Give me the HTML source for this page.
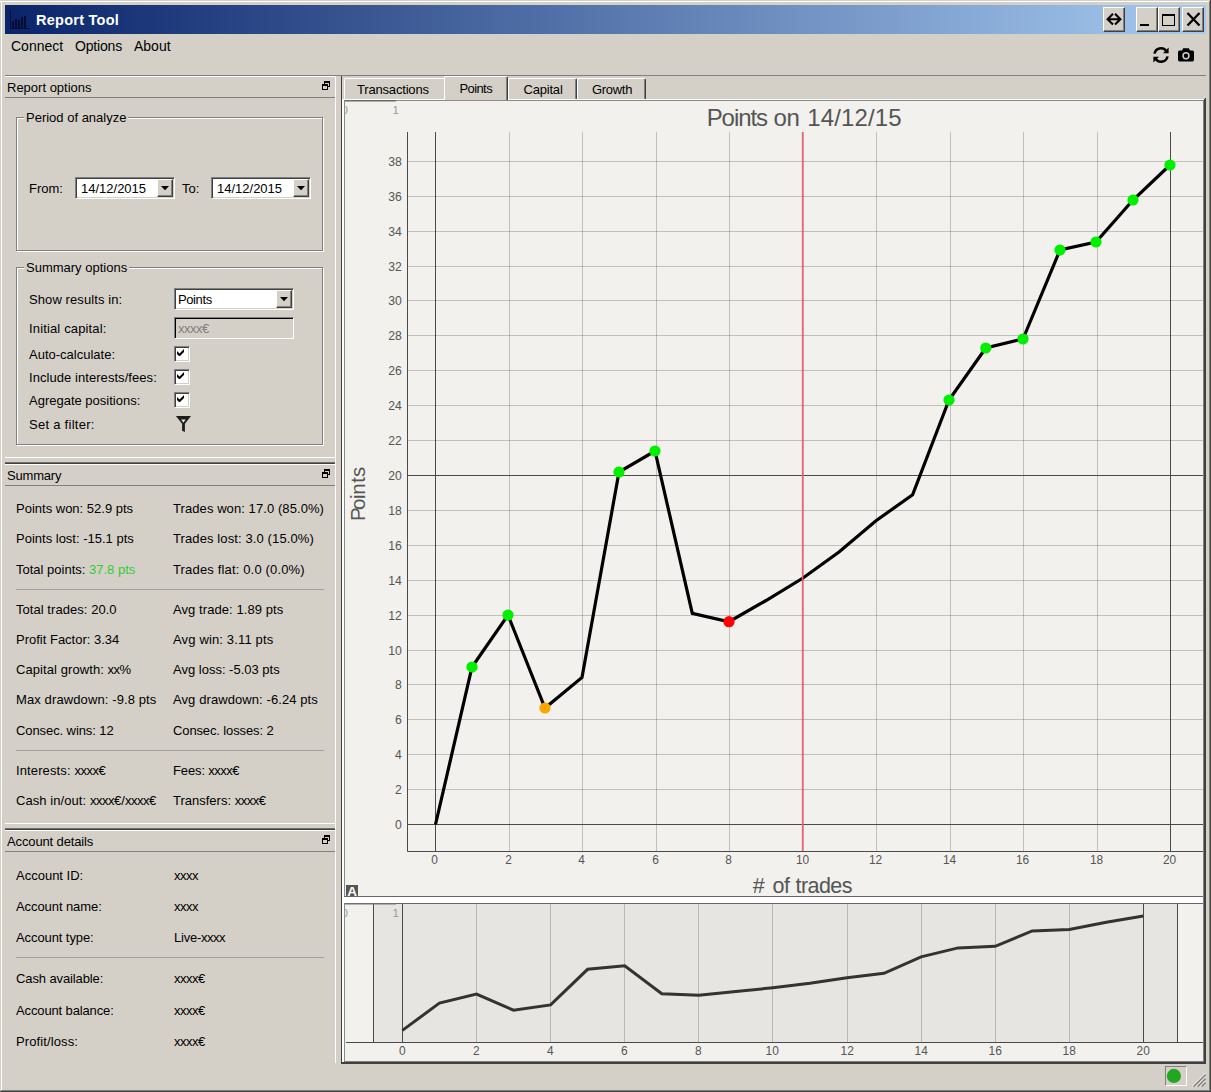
<!DOCTYPE html><html><head><meta charset="utf-8"><title>Report Tool</title><style>
*{box-sizing:border-box;margin:0;padding:0}
html,body{width:1211px;height:1092px;overflow:hidden;background:#d4d0c8}
body{position:relative;font-family:"Liberation Sans",sans-serif;font-size:13px;color:#000}
.a{position:absolute}
.t{position:absolute;white-space:nowrap;height:16px;line-height:16px;font-size:13px}
.m{position:absolute;white-space:nowrap;height:18px;line-height:18px;font-size:14px}
.hl{position:absolute;height:1px}
.vl{position:absolute;width:1px}
.btn{position:absolute;background:#d4d0c8;border:1px solid;border-color:#fff #404040 #404040 #fff;box-shadow:inset -1px -1px 0 #808080}
.sunk{position:absolute;background:#fff;border:1px solid;border-color:#808080 #fff #fff #808080;box-shadow:inset 1px 1px 0 #404040, inset -1px -1px 0 #d4d0c8}
.gb{position:absolute;border:1px solid #808080;box-shadow:1px 1px 0 #fff, inset 1px 1px 0 #fff}
.gbt{position:absolute;background:#d4d0c8;padding:0 2px;height:16px;line-height:16px;white-space:nowrap}
.x{letter-spacing:-0.5px}</style></head><body><div class="hl" style="left:0px;top:1px;width:1211px;background:#fff"></div><div class="vl" style="left:1px;top:1px;height:1090px;background:#fff"></div><div class="hl" style="left:0px;top:1091px;width:1211px;background:#404040"></div><div class="vl" style="left:1210px;top:0px;height:1092px;background:#404040"></div><div class="hl" style="left:1px;top:1090px;width:1209px;background:#808080"></div><div class="vl" style="left:1209px;top:1px;height:1090px;background:#808080"></div><div class="a" style="left:5px;top:5px;width:1201px;height:29px;background:linear-gradient(90deg,#0a246a 0%,#a6caf0 100%)"></div><div class="a" style="left:36px;top:10px;height:20px;line-height:20px;font-weight:bold;font-size:14.5px;letter-spacing:0.25px;color:#fff;white-space:nowrap">Report Tool</div><div class="m" style="left:11px;top:37px;">Connect</div><div class="m" style="left:75px;top:37px;letter-spacing:-0.18px;">Options</div><div class="m" style="left:134px;top:37px;">About</div><div class="hl" style="left:5px;top:75px;width:1201px;background:#808080"></div><div class="hl" style="left:5px;top:76px;width:331px;background:#fff"></div><svg class="a" style="left:9px;top:9px" width="22" height="22" viewBox="0 0 22 22"><g fill="#050b30"><rect x="1" y="1" width="1" height="19"/><rect x="1" y="19" width="20" height="1"/><rect x="3" y="12" width="2" height="7"/><rect x="6" y="10" width="2" height="9"/><rect x="9" y="11" width="2" height="8"/><rect x="12" y="8" width="2" height="11"/><rect x="15" y="7" width="2" height="12"/></g></svg><div class="btn" style="left:1103px;top:7px;width:22px;height:25px"><svg class="a" style="left:1px;top:4px" width="18" height="14" viewBox="0 0 18 14"><path d="M8 1.8 L2.6 7.2 L8 12.6 M10 1.8 L15.4 7.2 L10 12.6 M3 7.2 H15" fill="none" stroke="#000" stroke-width="2.1"/></svg></div><div class="btn" style="left:1136px;top:7px;width:22px;height:25px"><div class="a" style="left:3px;top:16px;width:9px;height:2px;background:#000"></div></div><div class="btn" style="left:1158px;top:7px;width:22px;height:25px"><div class="a" style="left:3px;top:6px;width:13px;height:12px;border:1px solid #000;border-top-width:2px"></div></div><div class="btn" style="left:1182px;top:7px;width:22px;height:25px"><svg class="a" style="left:3px;top:4px" width="16" height="15" viewBox="0 0 16 15"><path d="M1.5 1 L13.5 13.5 M13.5 1 L1.5 13.5" stroke="#000" stroke-width="2.3" fill="none"/></svg></div><svg class="a" style="left:1152px;top:46px" width="18" height="18" viewBox="0 0 18 18"><g fill="none" stroke="#000" stroke-width="2.5"><path d="M2.5 7.6 A6.5 6.5 0 0 1 14.2 5.0"/><path d="M15.5 10.4 A6.5 6.5 0 0 1 3.8 13.0"/></g><path d="M16.6 1.6 V7.2 H11 Z" fill="#000"/><path d="M1.4 16.4 V10.8 H7 Z" fill="#000"/></svg><svg class="a" style="left:1177px;top:47px" width="18" height="16" viewBox="0 0 18 16"><path d="M2.6 3.4 H5 L6.2 1.2 H11.8 L13 3.4 H15.4 Q17 3.4 17 5 V12.8 Q17 14.4 15.4 14.4 H2.6 Q1 14.4 1 12.8 V5 Q1 3.4 2.6 3.4 Z" fill="#000"/><circle cx="9" cy="8.8" r="3.7" fill="#d4d0c8"/><circle cx="9" cy="8.8" r="2.2" fill="#000"/></svg><div class="t" style="left:7px;top:79.5px;">Report options</div><svg class="a" style="left:322px;top:81px" width="8" height="9" viewBox="0 0 8 9"><g fill="none" stroke="#000"><rect x="2.5" y="0.5" width="5" height="5" stroke-width="1"/><path d="M2 1 H8" stroke-width="2"/><rect x="0.5" y="3.5" width="5" height="5" fill="#d4d0c8"/><path d="M0 4 H6" stroke-width="2"/></g></svg><div class="hl" style="left:5px;top:97px;width:330px;background:#808080"></div><div class="vl" style="left:335px;top:76px;height:987px;background:#fff"></div><div class="gb" style="left:16px;top:117px;width:307px;height:134px"></div><div class="gbt" style="left:24px;top:110px;">Period of analyze</div><div class="gb" style="left:16px;top:267px;width:307px;height:178px"></div><div class="gbt" style="left:24px;top:260px;">Summary options</div><div class="t" style="left:29px;top:180.5px;">From:</div><div class="sunk" style="left:75px;top:177px;width:100px;height:22px"><div class="t" style="left:5px;top:3px;">14/12/2015</div><div class="btn" style="left:81px;top:1px;width:16px;height:18px"><svg class="a" style="left:3px;top:6px" width="8" height="5" viewBox="0 0 8 5"><path d="M0 0 H8 L4 4.2 Z" fill="#000"/></svg></div></div><div class="t" style="left:182px;top:180.5px;">To:</div><div class="sunk" style="left:211px;top:177px;width:100px;height:22px"><div class="t" style="left:5px;top:3px;">14/12/2015</div><div class="btn" style="left:81px;top:1px;width:16px;height:18px"><svg class="a" style="left:3px;top:6px" width="8" height="5" viewBox="0 0 8 5"><path d="M0 0 H8 L4 4.2 Z" fill="#000"/></svg></div></div><div class="t" style="left:29px;top:291.5px;letter-spacing:0.09px;">Show results in:</div><div class="sunk" style="left:174px;top:288px;width:120px;height:22px"><div class="t" style="left:3px;top:3px;letter-spacing:-0.4px">Points</div><div class="btn" style="left:101px;top:1px;width:16px;height:18px"><svg class="a" style="left:3px;top:6px" width="8" height="5" viewBox="0 0 8 5"><path d="M0 0 H8 L4 4.2 Z" fill="#000"/></svg></div></div><div class="t" style="left:29px;top:320.5px;letter-spacing:0.15px;">Initial capital:</div><div class="sunk" style="left:174px;top:317px;width:120px;height:22px;background:#d4d0c8;border-color:#808080 #fff #fff #808080;box-shadow:inset 1px 1px 0 #000, inset -1px -1px 0 #d4d0c8"><div class="t" style="left:3px;top:3px;color:#808080;letter-spacing:-0.5px">xxxx€</div></div><div class="t" style="left:29px;top:346.5px;">Auto-calculate:</div><div class="sunk" style="left:174px;top:346px;width:16px;height:16px"><svg class="a" style="left:2px;top:2px" width="7" height="7" viewBox="0 0 7 7"><path d="M0 2 L0 5 L2 7 L3 7 L7 3 L7 0 L2.5 4.5 Z" fill="#000"/></svg></div><div class="t" style="left:29px;top:369.5px;letter-spacing:0.06px;">Include interests/fees:</div><div class="sunk" style="left:174px;top:369px;width:16px;height:16px"><svg class="a" style="left:2px;top:2px" width="7" height="7" viewBox="0 0 7 7"><path d="M0 2 L0 5 L2 7 L3 7 L7 3 L7 0 L2.5 4.5 Z" fill="#000"/></svg></div><div class="t" style="left:29px;top:392.5px;">Agregate positions:</div><div class="sunk" style="left:174px;top:392px;width:16px;height:16px"><svg class="a" style="left:2px;top:2px" width="7" height="7" viewBox="0 0 7 7"><path d="M0 2 L0 5 L2 7 L3 7 L7 3 L7 0 L2.5 4.5 Z" fill="#000"/></svg></div><div class="t" style="left:29px;top:416.5px;letter-spacing:0.27px;">Set a filter:</div><svg class="a" style="left:175px;top:415px" width="17" height="18" viewBox="0 0 17 18"><path d="M0.9 0.9 H16 L9.9 8.7 V16.9 L7.1 15.7 V8.7 Z" fill="#1c1c1c"/><path d="M6.1 4.6 H10.7 L8.4 7.7 Z" fill="#e6e4dc"/></svg><div class="hl" style="left:5px;top:457px;width:330px;background:#fff"></div><div class="hl" style="left:5px;top:462px;width:330px;background:#707070"></div><div class="hl" style="left:5px;top:463px;width:330px;background:#404040"></div><div class="hl" style="left:5px;top:464px;width:330px;background:#fff"></div><div class="t" style="left:7px;top:467.5px;letter-spacing:-0.20px;">Summary</div><svg class="a" style="left:322px;top:469px" width="8" height="9" viewBox="0 0 8 9"><g fill="none" stroke="#000"><rect x="2.5" y="0.5" width="5" height="5" stroke-width="1"/><path d="M2 1 H8" stroke-width="2"/><rect x="0.5" y="3.5" width="5" height="5" fill="#d4d0c8"/><path d="M0 4 H6" stroke-width="2"/></g></svg><div class="hl" style="left:5px;top:485px;width:330px;background:#808080"></div><div class="t" style="left:16px;top:500.5px;">Points won: 52.9 pts</div><div class="t" style="left:173px;top:500.5px;letter-spacing:0.08px;">Trades won: 17.0 (85.0%)</div><div class="t" style="left:16px;top:530.5px;">Points lost: -15.1 pts</div><div class="t" style="left:173px;top:530.5px;letter-spacing:0.11px;">Trades lost: 3.0 (15.0%)</div><div class="t" style="left:16px;top:561.5px;">Total points: <span style="color:#32cd32">37.8 pts</span></div><div class="t" style="left:173px;top:561.5px;letter-spacing:0.16px;">Trades flat: 0.0 (0.0%)</div><div class="t" style="left:16px;top:601.5px;letter-spacing:0.05px;">Total trades: 20.0</div><div class="t" style="left:173px;top:601.5px;letter-spacing:0.07px;">Avg trade: 1.89 pts</div><div class="t" style="left:16px;top:631.5px;">Profit Factor: 3.34</div><div class="t" style="left:173px;top:631.5px;letter-spacing:0.15px;">Avg win: 3.11 pts</div><div class="t" style="left:16px;top:661.5px;letter-spacing:0.08px;">Capital growth: <span class="x">xx</span>%</div><div class="t" style="left:173px;top:661.5px;">Avg loss: -5.03 pts</div><div class="t" style="left:16px;top:691.5px;letter-spacing:0.11px;">Max drawdown: -9.8 pts</div><div class="t" style="left:173px;top:691.5px;letter-spacing:0.09px;">Avg drawdown: -6.24 pts</div><div class="t" style="left:16px;top:722.5px;letter-spacing:-0.09px;">Consec. wins: 12</div><div class="t" style="left:173px;top:722.5px;letter-spacing:-0.12px;">Consec. losses: 2</div><div class="t" style="left:16px;top:762.5px;letter-spacing:0.12px;">Interests: <span class="x">xxxx</span>€</div><div class="t" style="left:173px;top:762.5px;letter-spacing:-0.13px;">Fees: <span class="x">xxxx</span>€</div><div class="t" style="left:16px;top:792.5px;letter-spacing:0.07px;">Cash in/out: <span class="x">xxxx</span>€/<span class="x">xxxx</span>€</div><div class="t" style="left:173px;top:792.5px;">Transfers: <span class="x">xxxx</span>€</div><div class="hl" style="left:16px;top:589px;width:308px;background:#a0a0a0"></div><div class="hl" style="left:16px;top:750px;width:308px;background:#a0a0a0"></div><div class="hl" style="left:5px;top:823px;width:330px;background:#fff"></div><div class="hl" style="left:5px;top:828px;width:330px;background:#707070"></div><div class="hl" style="left:5px;top:829px;width:330px;background:#404040"></div><div class="hl" style="left:5px;top:830px;width:330px;background:#fff"></div><div class="t" style="left:7px;top:833.5px;letter-spacing:-0.13px;">Account details</div><svg class="a" style="left:322px;top:835px" width="8" height="9" viewBox="0 0 8 9"><g fill="none" stroke="#000"><rect x="2.5" y="0.5" width="5" height="5" stroke-width="1"/><path d="M2 1 H8" stroke-width="2"/><rect x="0.5" y="3.5" width="5" height="5" fill="#d4d0c8"/><path d="M0 4 H6" stroke-width="2"/></g></svg><div class="hl" style="left:5px;top:851px;width:330px;background:#808080"></div><div class="t" style="left:16px;top:867.5px;">Account ID:</div><div class="t" style="left:174px;top:867.5px;"><span class="x">xxxx</span></div><div class="t" style="left:16px;top:898.5px;letter-spacing:-0.08px;">Account name:</div><div class="t" style="left:174px;top:898.5px;"><span class="x">xxxx</span></div><div class="t" style="left:16px;top:929.5px;letter-spacing:-0.09px;">Account type:</div><div class="t" style="left:174px;top:929.5px;letter-spacing:-0.22px;">Live-<span class="x">xxxx</span></div><div class="t" style="left:16px;top:970.5px;letter-spacing:-0.11px;">Cash available:</div><div class="t" style="left:174px;top:970.5px;"><span class="x">xxxx</span>€</div><div class="t" style="left:16px;top:1002.5px;letter-spacing:-0.13px;">Account balance:</div><div class="t" style="left:174px;top:1002.5px;"><span class="x">xxxx</span>€</div><div class="t" style="left:16px;top:1033.5px;letter-spacing:0.11px;">Profit/loss:</div><div class="t" style="left:174px;top:1033.5px;"><span class="x">xxxx</span>€</div><div class="hl" style="left:16px;top:957px;width:308px;background:#a0a0a0"></div><div class="vl" style="left:341px;top:76px;height:988px;background:#404040"></div><div class="hl" style="left:342px;top:99px;width:863px;background:#fff"></div><div class="a" style="left:344px;top:78px;width:103px;height:21px;background:#d4d0c8;border-left:1px solid #fff;border-top:1px solid #fff;border-right:1px solid #404040;box-shadow:inset -1px 0 0 #808080;border-radius:2px 2px 0 0"></div><div class="t" style="left:357px;top:81.5px;letter-spacing:-0.18px;">Transactions</div><div class="a" style="left:508px;top:78px;width:69px;height:21px;background:#d4d0c8;border-left:1px solid #fff;border-top:1px solid #fff;border-right:1px solid #404040;box-shadow:inset -1px 0 0 #808080;border-radius:2px 2px 0 0"></div><div class="t" style="left:523.5px;top:81.5px;letter-spacing:-0.20px;">Capital</div><div class="a" style="left:577px;top:78px;width:69px;height:21px;background:#d4d0c8;border-left:1px solid #fff;border-top:1px solid #fff;border-right:1px solid #404040;box-shadow:inset -1px 0 0 #808080;border-radius:2px 2px 0 0"></div><div class="t" style="left:592px;top:81.5px;letter-spacing:-0.30px;">Growth</div><div class="a" style="left:444px;top:76px;width:64px;height:24px;background:#d4d0c8;border-left:1px solid #fff;border-top:1px solid #fff;border-right:1px solid #404040;box-shadow:inset -1px 0 0 #808080;border-radius:2px 2px 0 0"></div><div class="t" style="left:459.5px;top:80.5px;letter-spacing:-0.60px;">Points</div><div class="vl" style="left:342px;top:99px;height:964px;background:#fff"></div><div class="vl" style="left:343px;top:99px;height:964px;background:#fff"></div><div class="vl" style="left:1203px;top:100px;height:962px;background:#808080"></div><div class="vl" style="left:1204px;top:99px;height:965px;background:#404040"></div><div class="vl" style="left:1205px;top:98px;height:966px;background:#404040"></div><div class="hl" style="left:344px;top:1061px;width:860px;background:#808080"></div><div class="hl" style="left:342px;top:1062px;width:864px;background:#404040"></div><div class="hl" style="left:341px;top:1063px;width:865px;background:#404040"></div><div class="a" style="left:1165px;top:1066px;width:22px;height:20px;border:1px solid;border-color:#808080 #fff #fff #808080"></div><svg class="a" style="left:1164px;top:1066px" width="20" height="20"><circle cx="9.9" cy="9.9" r="7.1" fill="#22a722"/></svg><svg class="a" style="left:1192px;top:1073px" width="14" height="14" viewBox="0 0 14 14"><g><path d="M13.5 1.5 L1.5 13.5 M13.5 5.5 L5.5 13.5 M13.5 9.5 L9.5 13.5" stroke="#808080" stroke-width="1.8"/><path d="M13.5 0 L0 13.5 M13.5 4 L4 13.5 M13.5 8 L8 13.5" stroke="#fff" stroke-width="1"/></g></svg><svg class="a" style="left:344px;top:100px" width="859" height="797" viewBox="344 100 859 797" font-family="Liberation Sans, sans-serif"><rect x="344" y="100" width="859" height="797" fill="#f2f1ed"/><path d="M435.5 132 V851" stroke="#4a4a4a" stroke-width="1"/><path d="M509.5 132 V851" stroke="rgba(0,0,0,0.2)" stroke-width="1"/><path d="M582.5 132 V851" stroke="rgba(0,0,0,0.2)" stroke-width="1"/><path d="M656.5 132 V851" stroke="rgba(0,0,0,0.2)" stroke-width="1"/><path d="M729.5 132 V851" stroke="rgba(0,0,0,0.2)" stroke-width="1"/><path d="M803.5 132 V851" stroke="rgba(0,0,0,0.2)" stroke-width="1"/><path d="M876.5 132 V851" stroke="rgba(0,0,0,0.2)" stroke-width="1"/><path d="M950.5 132 V851" stroke="rgba(0,0,0,0.2)" stroke-width="1"/><path d="M1023.5 132 V851" stroke="rgba(0,0,0,0.2)" stroke-width="1"/><path d="M1097.5 132 V851" stroke="rgba(0,0,0,0.2)" stroke-width="1"/><path d="M1170.5 132 V851" stroke="#4a4a4a" stroke-width="1"/><path d="M407 824.5 H1204" stroke="#4a4a4a" stroke-width="1"/><text x="401.9" y="828.9" font-size="12.2" fill="#555" text-anchor="end">0</text><path d="M407 789.5 H1204" stroke="rgba(0,0,0,0.2)" stroke-width="1"/><text x="401.9" y="793.9" font-size="12.2" fill="#555" text-anchor="end">2</text><path d="M407 754.5 H1204" stroke="rgba(0,0,0,0.2)" stroke-width="1"/><text x="401.9" y="758.9" font-size="12.2" fill="#555" text-anchor="end">4</text><path d="M407 719.5 H1204" stroke="rgba(0,0,0,0.2)" stroke-width="1"/><text x="401.9" y="723.9" font-size="12.2" fill="#555" text-anchor="end">6</text><path d="M407 684.5 H1204" stroke="rgba(0,0,0,0.2)" stroke-width="1"/><text x="401.9" y="688.9" font-size="12.2" fill="#555" text-anchor="end">8</text><path d="M407 650.5 H1204" stroke="rgba(0,0,0,0.2)" stroke-width="1"/><text x="401.9" y="654.9" font-size="12.2" fill="#555" text-anchor="end">10</text><path d="M407 615.5 H1204" stroke="rgba(0,0,0,0.2)" stroke-width="1"/><text x="401.9" y="619.9" font-size="12.2" fill="#555" text-anchor="end">12</text><path d="M407 580.5 H1204" stroke="rgba(0,0,0,0.2)" stroke-width="1"/><text x="401.9" y="584.9" font-size="12.2" fill="#555" text-anchor="end">14</text><path d="M407 545.5 H1204" stroke="rgba(0,0,0,0.2)" stroke-width="1"/><text x="401.9" y="549.9" font-size="12.2" fill="#555" text-anchor="end">16</text><path d="M407 510.5 H1204" stroke="rgba(0,0,0,0.2)" stroke-width="1"/><text x="401.9" y="514.9" font-size="12.2" fill="#555" text-anchor="end">18</text><path d="M407 475.5 H1204" stroke="#4a4a4a" stroke-width="1"/><text x="401.9" y="479.9" font-size="12.2" fill="#555" text-anchor="end">20</text><path d="M407 440.5 H1204" stroke="rgba(0,0,0,0.2)" stroke-width="1"/><text x="401.9" y="444.9" font-size="12.2" fill="#555" text-anchor="end">22</text><path d="M407 405.5 H1204" stroke="rgba(0,0,0,0.2)" stroke-width="1"/><text x="401.9" y="409.9" font-size="12.2" fill="#555" text-anchor="end">24</text><path d="M407 370.5 H1204" stroke="rgba(0,0,0,0.2)" stroke-width="1"/><text x="401.9" y="374.9" font-size="12.2" fill="#555" text-anchor="end">26</text><path d="M407 335.5 H1204" stroke="rgba(0,0,0,0.2)" stroke-width="1"/><text x="401.9" y="339.9" font-size="12.2" fill="#555" text-anchor="end">28</text><path d="M407 300.5 H1204" stroke="rgba(0,0,0,0.2)" stroke-width="1"/><text x="401.9" y="304.9" font-size="12.2" fill="#555" text-anchor="end">30</text><path d="M407 266.5 H1204" stroke="rgba(0,0,0,0.2)" stroke-width="1"/><text x="401.9" y="270.9" font-size="12.2" fill="#555" text-anchor="end">32</text><path d="M407 231.5 H1204" stroke="rgba(0,0,0,0.2)" stroke-width="1"/><text x="401.9" y="235.9" font-size="12.2" fill="#555" text-anchor="end">34</text><path d="M407 196.5 H1204" stroke="rgba(0,0,0,0.2)" stroke-width="1"/><text x="401.9" y="200.9" font-size="12.2" fill="#555" text-anchor="end">36</text><path d="M407 161.5 H1204" stroke="rgba(0,0,0,0.2)" stroke-width="1"/><text x="401.9" y="165.9" font-size="12.2" fill="#555" text-anchor="end">38</text><text x="434.5" y="864" font-size="11.9" fill="#555" text-anchor="middle">0</text><text x="508.5" y="864" font-size="11.9" fill="#555" text-anchor="middle">2</text><text x="581.5" y="864" font-size="11.9" fill="#555" text-anchor="middle">4</text><text x="655.5" y="864" font-size="11.9" fill="#555" text-anchor="middle">6</text><text x="728.5" y="864" font-size="11.9" fill="#555" text-anchor="middle">8</text><text x="802.5" y="864" font-size="11.9" fill="#555" text-anchor="middle">10</text><text x="875.5" y="864" font-size="11.9" fill="#555" text-anchor="middle">12</text><text x="949.5" y="864" font-size="11.9" fill="#555" text-anchor="middle">14</text><text x="1022.5" y="864" font-size="11.9" fill="#555" text-anchor="middle">16</text><text x="1096.5" y="864" font-size="11.9" fill="#555" text-anchor="middle">18</text><text x="1169.5" y="864" font-size="11.9" fill="#555" text-anchor="middle">20</text><path d="M407.5 132 V851.5 H1204" fill="none" stroke="#4a4a4a" stroke-width="1"/><polyline fill="none" stroke="#000" stroke-width="3.2" stroke-linejoin="miter" points="435.5,824.5 472,667 508,615 545,708 582,677.5 619,472 655,451 692.3,613.4 729,621.7 766,600.5 803,578 839,552 876,520.7 912.6,494.8 949,400 985.8,348 1023,339 1060,250 1096,242 1133,200 1170,165"/><circle cx="472" cy="667" r="5.6" fill="#00f000"/><circle cx="508" cy="615" r="5.6" fill="#00f000"/><circle cx="545" cy="708" r="5.6" fill="#ffa500"/><circle cx="619" cy="472" r="5.6" fill="#00f000"/><circle cx="655" cy="451" r="5.6" fill="#00f000"/><circle cx="729" cy="621.7" r="5.6" fill="#ff0000"/><circle cx="949" cy="400" r="5.6" fill="#00f000"/><circle cx="985.8" cy="348" r="5.6" fill="#00f000"/><circle cx="1023" cy="339" r="5.6" fill="#00f000"/><circle cx="1060" cy="250" r="5.6" fill="#00f000"/><circle cx="1096" cy="242" r="5.6" fill="#00f000"/><circle cx="1133" cy="200" r="5.6" fill="#00f000"/><circle cx="1170" cy="165" r="5.6" fill="#00f000"/><path d="M802.6 132 V851" stroke="#fa5a6e" stroke-width="1.5"/><text y="125.8" font-size="24" fill="#555"><tspan x="706.7" letter-spacing="-1.08">Points</tspan> <tspan x="773.6" letter-spacing="-0.4">on</tspan> <tspan x="807.3" letter-spacing="0.13">14/12/15</tspan></text><text y="893.4" font-size="21.5" fill="#555"><tspan x="752.7">#</tspan> <tspan x="772.4" letter-spacing="-0.3">of</tspan> <tspan x="795.5" letter-spacing="-0.55">trades</tspan></text><text transform="translate(364.6,521.0) rotate(-90)" font-size="20.5" dx="0 -2.6 -0.5 -0.2 0.4 0.1" fill="#555">Points</text><path d="M344 100.5 H1203" stroke="#8a8a8a" stroke-width="1"/><path d="M344 100.75 H396" stroke="#6a6a6a" stroke-width="1.5"/><path d="M344.5 100 V897" stroke="#8a8a8a" stroke-width="1"/><text x="341.5" y="114" font-size="11.5" fill="#9a9a9a">0</text><text x="392.5" y="114" font-size="11.5" fill="#9a9a9a">1</text><rect x="346" y="885" width="12" height="11" fill="#555"/><text x="352" y="896" font-size="13.5" font-weight="bold" fill="#fff" text-anchor="middle">A</text><path d="M344 896.5 H1204" stroke="#666" stroke-width="1"/></svg><div class="a" style="left:344px;top:897px;width:859px;height:6px;background:#fff"></div><svg class="a" style="left:344px;top:903px" width="859" height="158" viewBox="344 903 859 158" font-family="Liberation Sans, sans-serif"><rect x="344" y="903" width="859" height="158" fill="#f2f1ed"/><path d="M344 903.5 H1204" stroke="#666" stroke-width="1"/><rect x="373" y="904" width="804" height="138" fill="#e6e5e1"/><path d="M373.5 904 V1042 M1177.5 904 V1042" stroke="#4a4a4a" stroke-width="1"/><path d="M402.5 904 V1042" stroke="#4a4a4a" stroke-width="1"/><text x="402.2" y="1055.3" font-size="11.9" fill="#555" text-anchor="middle">0</text><path d="M476.5 904 V1042" stroke="rgba(0,0,0,0.2)" stroke-width="1"/><text x="476.2" y="1055.3" font-size="11.9" fill="#555" text-anchor="middle">2</text><path d="M550.5 904 V1042" stroke="rgba(0,0,0,0.2)" stroke-width="1"/><text x="550.2" y="1055.3" font-size="11.9" fill="#555" text-anchor="middle">4</text><path d="M624.5 904 V1042" stroke="rgba(0,0,0,0.2)" stroke-width="1"/><text x="624.2" y="1055.3" font-size="11.9" fill="#555" text-anchor="middle">6</text><path d="M698.5 904 V1042" stroke="rgba(0,0,0,0.2)" stroke-width="1"/><text x="698.2" y="1055.3" font-size="11.9" fill="#555" text-anchor="middle">8</text><path d="M772.5 904 V1042" stroke="rgba(0,0,0,0.2)" stroke-width="1"/><text x="772.2" y="1055.3" font-size="11.9" fill="#555" text-anchor="middle">10</text><path d="M847.5 904 V1042" stroke="rgba(0,0,0,0.2)" stroke-width="1"/><text x="847.2" y="1055.3" font-size="11.9" fill="#555" text-anchor="middle">12</text><path d="M921.5 904 V1042" stroke="rgba(0,0,0,0.2)" stroke-width="1"/><text x="921.2" y="1055.3" font-size="11.9" fill="#555" text-anchor="middle">14</text><path d="M995.5 904 V1042" stroke="rgba(0,0,0,0.2)" stroke-width="1"/><text x="995.2" y="1055.3" font-size="11.9" fill="#555" text-anchor="middle">16</text><path d="M1069.5 904 V1042" stroke="rgba(0,0,0,0.2)" stroke-width="1"/><text x="1069.2" y="1055.3" font-size="11.9" fill="#555" text-anchor="middle">18</text><path d="M1143.5 904 V1042" stroke="#4a4a4a" stroke-width="1"/><text x="1143.2" y="1055.3" font-size="11.9" fill="#555" text-anchor="middle">20</text><path d="M346 1042.5 H1204" stroke="#4a4a4a" stroke-width="1"/><polyline fill="none" stroke="#333" stroke-width="3" stroke-linejoin="miter" points="402.4,1030.4 439.4,1003.1 476.5,994.1 513.5,1010.2 550.6,1004.9 587.6,969.3 624.7,965.7 661.8,993.8 698.8,995.3 735.8,991.6 772.9,987.7 809.9,983.2 847.0,977.8 884.0,973.3 921.1,956.9 958.1,947.9 995.2,946.3 1032.2,930.9 1069.3,929.5 1106.3,922.2 1143.4,916.1"/><path d="M344 904 H396" stroke="#777" stroke-width="1"/><path d="M344.5 903 V1062" stroke="#8a8a8a" stroke-width="1"/><text x="341.5" y="917" font-size="11.5" fill="#9a9a9a">0</text><text x="392.5" y="917" font-size="11.5" fill="#9a9a9a">1</text></svg></body></html>
